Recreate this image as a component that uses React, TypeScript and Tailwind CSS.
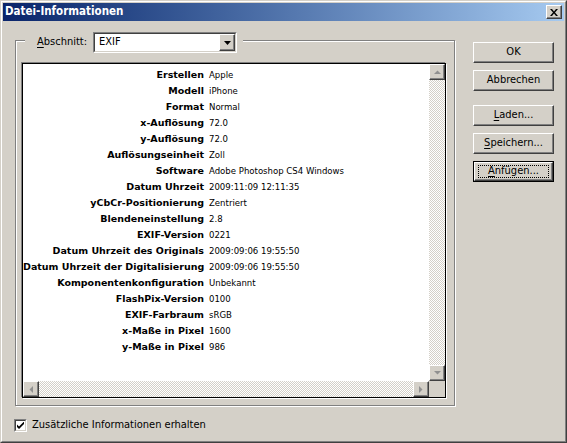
import React from "react";

const rows: [string, string][] = [
  ["Erstellen", "Apple"],
  ["Modell", "iPhone"],
  ["Format", "Normal"],
  ["x-Auflösung", "72.0"],
  ["y-Auflösung", "72.0"],
  ["Auflösungseinheit", "Zoll"],
  ["Software", "Adobe Photoshop CS4 Windows"],
  ["Datum Uhrzeit", "2009:11:09 12:11:35"],
  ["yCbCr-Positionierung", "Zentriert"],
  ["Blendeneinstellung", "2.8"],
  ["EXIF-Version", "0221"],
  ["Datum Uhrzeit des Originals", "2009:09:06 19:55:50"],
  ["Datum Uhrzeit der Digitalisierung", "2009:09:06 19:55:50"],
  ["Komponentenkonfiguration", "Unbekannt"],
  ["FlashPix-Version", "0100"],
  ["EXIF-Farbraum", "sRGB"],
  ["x-Maße in Pixel", "1600"],
  ["y-Maße in Pixel", "986"],
];

function Bevel({ children, className = "" }: { children?: React.ReactNode; className?: string }) {
  return (
    <div
      className={
        "border border-t-white border-l-white border-r-[#404040] border-b-[#404040] shadow-[inset_-1px_-1px_0_#808080] bg-[#d4d0c8] flex items-center justify-center " +
        className
      }
    >
      {children}
    </div>
  );
}

function Btn({ children, def }: { children: React.ReactNode; def?: boolean }) {
  if (def) {
    return (
      <div className="w-[81px] h-[21px] border border-black">
        <Bevel className="w-full h-full">
          <div className="w-[71px] h-[13px] border border-dotted border-black flex items-center justify-center">
            {children}
          </div>
        </Bevel>
      </div>
    );
  }
  return <Bevel className="w-[81px] h-[21px]">{children}</Bevel>;
}

function Arrow({ dir }: { dir: "up" | "down" | "left" | "right" }) {
  const d =
    dir === "up"
      ? "M0 4h7L3.5 0.5z"
      : dir === "down"
      ? "M0 0h7L3.5 3.5z"
      : dir === "left"
      ? "M4 0v7L0.5 3.5z"
      : "M0 0v7L3.5 3.5z";
  const vertical = dir === "up" || dir === "down";
  return (
    <svg width={vertical ? 7 : 4} height={vertical ? 4 : 7} viewBox={vertical ? "0 0 7 4" : "0 0 4 7"}>
      <path d={d} fill="#909090" />
    </svg>
  );
}

const track =
  "bg-[repeating-conic-gradient(#d4d0c8_0%_25%,#ffffff_0%_50%)] bg-[length:2px_2px]";

export default function App() {
  return (
    <div className="w-[567px] h-[443px] bg-[#d4d0c8] border border-t-[#d4d0c8] border-l-[#d4d0c8] border-r-[#404040] border-b-[#404040] font-['DejaVu_Sans_Condensed','Liberation_Sans',sans-serif] text-[11px] text-black select-none">
      <div className="w-full h-full border border-t-white border-l-white border-r-[#808080] border-b-[#808080] p-px flex flex-col">
        {/* title bar */}
        <div className="h-[18px] bg-linear-to-r from-[#0a246a] to-[#a6caf0] flex items-center pl-[2px] pr-[2px]">
          <span className="text-white font-bold text-[11.5px] leading-none flex-1">Datei-Informationen</span>
          <Bevel className="w-[16px] h-[14px]">
            <svg width="8" height="7" viewBox="0 0 8 7">
              <path d="M0 0h2l2 2.4L6 0h2L5 3.5 8 7H6L4 4.6 2 7H0l3-3.5z" fill="black" />
            </svg>
          </Bevel>
        </div>

        {/* body */}
        <div className="flex pl-[12px] pt-[19px]">
          {/* group box */}
          <div className="relative w-[440px] h-[366px] border border-[#808080] shadow-[inset_1px_1px_0_#fff,1px_1px_0_#fff]">
            <div className="absolute left-[9px] top-[-9px] bg-[#d4d0c8] pl-[12px] pr-[6px] flex items-center h-[21px]">
              <span className="mr-[6px]">
                <span className="underline underline-offset-2">A</span>bschnitt:
              </span>
              <div className="w-[144px] h-[21px] border border-t-[#808080] border-l-[#808080] border-r-white border-b-white">
                <div className="w-full h-full border border-t-[#404040] border-l-[#404040] border-r-[#d4d0c8] border-b-[#d4d0c8] bg-white flex items-center">
                  <span className="flex-1 pl-[4px]">EXIF</span>
                  <Bevel className="w-[16px] h-full">
                    <svg width="7" height="4" viewBox="0 0 7 4">
                      <path d="M0 0h7L3.5 4z" fill="black" />
                    </svg>
                  </Bevel>
                </div>
              </div>
            </div>

            {/* list box */}
            <div className="ml-[6px] mt-[22px] w-[424px] h-[335px] border border-black shadow-[-1px_-1px_0_#808080,1px_1px_0_#fff] bg-white flex flex-col">
              <div className="flex flex-1 min-h-0">
                <div className="flex-1 pt-[3px]">
                  <div className="grid grid-cols-[181px_1fr] gap-x-[5px]">
                    {rows.map(([k, v]) => (
                      <React.Fragment key={k}>
                        <div className="text-right font-['DejaVu_Sans',sans-serif] font-bold text-[9.5px] leading-[16px] whitespace-nowrap">
                          {k}
                        </div>
                        <div className="text-[9.5px] leading-[16px] whitespace-nowrap">{v}</div>
                      </React.Fragment>
                    ))}
                  </div>
                </div>
                <div className={"w-[16px] flex flex-col " + track}>
                  <Bevel className="w-[16px] h-[16px]">
                    <Arrow dir="up" />
                  </Bevel>
                  <div className="flex-1" />
                  <Bevel className="w-[16px] h-[16px]">
                    <Arrow dir="down" />
                  </Bevel>
                </div>
              </div>
              <div className="flex h-[16px]">
                <div className={"flex-1 flex " + track}>
                  <Bevel className="w-[16px] h-[16px]">
                    <Arrow dir="left" />
                  </Bevel>
                  <div className="flex-1" />
                  <Bevel className="w-[16px] h-[16px]">
                    <Arrow dir="right" />
                  </Bevel>
                </div>
                <div className="w-[16px] h-[16px] bg-[#d4d0c8]" />
              </div>
            </div>
          </div>

          {/* buttons */}
          <div className="ml-[18px] mt-[2px] flex flex-col">
            <Btn>OK</Btn>
            <div className="mt-[7px]">
              <Btn>Abbrechen</Btn>
            </div>
            <div className="mt-[14px]">
              <Btn>
                <span>
                  <span className="underline underline-offset-2">L</span>aden...
                </span>
              </Btn>
            </div>
            <div className="mt-[7px]">
              <Btn>
                <span>
                  <span className="underline underline-offset-2">S</span>peichern...
                </span>
              </Btn>
            </div>
            <div className="mt-[7px]">
              <Btn def>
                <span>
                  <span className="underline underline-offset-2">A</span>nfügen...
                </span>
              </Btn>
            </div>
          </div>
        </div>

        {/* checkbox row */}
        <div className="flex items-center pl-[11px] mt-[11px]">
          <div className="w-[13px] h-[13px] border border-t-[#808080] border-l-[#808080] border-r-white border-b-white">
            <div className="w-full h-full border border-t-[#404040] border-l-[#404040] border-r-[#d4d0c8] border-b-[#d4d0c8] bg-white flex items-center justify-center">
              <svg width="7" height="7" viewBox="0 0 7 7">
                <path d="M0 2.5L2 4.5L7 -0.5V2L2 7L0 5Z" fill="black" />
              </svg>
            </div>
          </div>
          <span className="ml-[5px]">Zusätzliche Informationen erhalten</span>
        </div>
      </div>
    </div>
  );
}
